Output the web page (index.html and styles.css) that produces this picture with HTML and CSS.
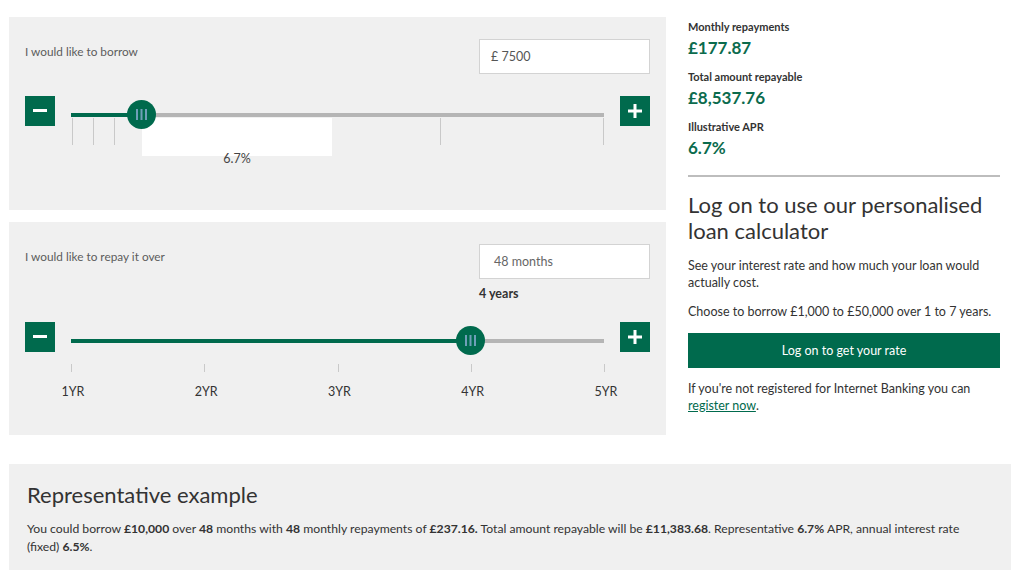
FILE: index.html
```html
<!DOCTYPE html>
<html lang="en">

<head>
    <meta charset="UTF-8">
    <meta name="viewport" content="width=device-width, initial-scale=1.0">
    <title>Loan calculator</title>
    <link rel="stylesheet" href="styles.css">
</head>

<body>
    <div class="page">
        <div class="top">
            <div class="calc">
                <!-- amount -->
                <div class="panel panel-amount">
                    <div class="head">
                        <div class="label">I would like to borrow</div>
                        <div class="field-wrap">
                            <div class="field">£ 7500</div>
                        </div>
                    </div>
                    <div class="slider">
                        <button class="step"><svg width="14" height="4"><rect width="14" height="3" fill="#fff"/></svg></button>
                        <div class="track">
                            <div class="bar"></div>
                            <div class="fill" style="width:13.3%"></div>
                            <span class="tick tall" style="left:1px"></span>
                            <span class="tick tall" style="left:22px"></span>
                            <span class="tick tall" style="left:43px"></span>
                            <span class="tick tall dark" style="left:71px"></span>
                            <span class="tick tall" style="left:260px"></span>
                            <span class="tick tall" style="left:369px"></span>
                            <span class="tick tall" style="left:532px"></span>
                            <div class="tip" style="left:71px"><span>6.7%</span></div>
                            <div class="thumb" style="left:13.3%">
                                <svg width="29" height="29">
                                    <circle cx="14.5" cy="14.5" r="14.5" fill="#006a4d"/>
                                    <rect x="9" y="9" width="2" height="11" fill="#6f9fb8"/>
                                    <rect x="13.5" y="9" width="2" height="11" fill="#6f9fb8"/>
                                    <rect x="18" y="9" width="2" height="11" fill="#6f9fb8"/>
                                </svg>
                            </div>
                        </div>
                        <button class="step"><svg width="14" height="14"><rect y="5.5" width="14" height="3" fill="#fff"/><rect x="5.5" width="3" height="14" fill="#fff"/></svg></button>
                    </div>
                </div>

                <!-- term -->
                <div class="panel panel-term">
                    <div class="head">
                        <div class="label">I would like to repay it over</div>
                        <div class="field-wrap">
                            <div class="field field-term">48 months</div>
                            <div class="years">4 years</div>
                        </div>
                    </div>
                    <div class="slider slider-term">
                        <button class="step"><svg width="14" height="4"><rect width="14" height="3" fill="#fff"/></svg></button>
                        <div class="track">
                            <div class="bar"></div>
                            <div class="fill" style="width:75%"></div>
                            <span class="tick short" style="left:0%"></span>
                            <span class="tick short" style="left:25%"></span>
                            <span class="tick short" style="left:50%"></span>
                            <span class="tick short" style="left:75%"></span>
                            <span class="tick short" style="left:100%"></span>
                            <span class="yr" style="left:0%">1YR</span>
                            <span class="yr" style="left:25%">2YR</span>
                            <span class="yr" style="left:50%">3YR</span>
                            <span class="yr" style="left:75%">4YR</span>
                            <span class="yr" style="left:100%">5YR</span>
                            <div class="thumb" style="left:75%">
                                <svg width="29" height="29">
                                    <circle cx="14.5" cy="14.5" r="14.5" fill="#006a4d"/>
                                    <rect x="9" y="9" width="2" height="11" fill="#6f9fb8"/>
                                    <rect x="13.5" y="9" width="2" height="11" fill="#6f9fb8"/>
                                    <rect x="18" y="9" width="2" height="11" fill="#6f9fb8"/>
                                </svg>
                            </div>
                        </div>
                        <button class="step"><svg width="14" height="14"><rect y="5.5" width="14" height="3" fill="#fff"/><rect x="5.5" width="3" height="14" fill="#fff"/></svg></button>
                    </div>
                </div>
            </div>

            <div class="side">
                <div class="stat">
                    <div class="stat-label">Monthly repayments</div>
                    <div class="stat-value">£177.87</div>
                </div>
                <div class="stat">
                    <div class="stat-label">Total amount repayable</div>
                    <div class="stat-value">£8,537.76</div>
                </div>
                <div class="stat">
                    <div class="stat-label">Illustrative APR</div>
                    <div class="stat-value">6.7%</div>
                </div>
                <hr class="rule">
                <h2 class="side-title">Log on to use our personalised loan calculator</h2>
                <p class="side-text first">See your interest rate and how much your loan would actually cost.</p>
                <p class="side-text">Choose to borrow £1,000 to £50,000 over 1 to 7 years.</p>
                <a class="btn" href="#">Log on to get your rate</a>
                <p class="side-text note">If you're not registered for Internet Banking you can <a href="#">register now</a>.</p>
            </div>
        </div>

        <div class="example">
            <h2>Representative example</h2>
            <p>You could borrow <b>£10,000</b> over <b>48</b> months with <b>48</b> monthly repayments of <b>£237.16.</b> Total amount repayable will be <b>£11,383.68</b>. Representative <b>6.7%</b> APR, annual interest rate (fixed) <b>6.5%</b>.</p>
        </div>
    </div>
</body>

</html>
```

FILE: styles.css
```css
* {
    margin: 0;
    padding: 0;
    box-sizing: border-box;
}

body {
    font-family: Lato, "Liberation Sans", sans-serif;
    color: #333;
    background: #fff;
}

.page {
    width: 1011px;
    padding: 17px 0 0 9px;
}

.top {
    display: flex;
    gap: 22px;
}

.calc {
    width: 657px;
    display: flex;
    flex-direction: column;
    gap: 12px;
}

.panel {
    background: #f0f0f0;
    padding: 22px 16px 0;
}
.panel-amount {
    height: 193px;
}
.panel-term {
    height: 213px;
}

.head {
    display: flex;
    justify-content: space-between;
}

.label {
    padding-top: 4px;
    font-size: 11.8px;
    line-height: 17px;
    color: #5c5c5c;
}

.field-wrap {
    width: 171px;
}

.field {
    height: 35px;
    line-height: 33px;
    background: #fff;
    border: 1px solid #d3d3d3;
    padding-left: 11px;
    font-size: 12.5px;
    color: #555;
}
.field-term {
    padding-left: 14px;
    color: #666;
}

.years {
    margin-top: 6px;
    font-size: 12.5px;
    line-height: 17px;
    font-weight: bold;
    color: #333;
}

.slider {
    display: flex;
    gap: 16px;
    margin-top: 22px;
}
.slider-term {
    margin-top: 20px;
}

.step {
    width: 30px;
    height: 30px;
    flex: none;
    border: none;
    background: #006a4d;
    display: flex;
    align-items: center;
    justify-content: center;
    cursor: pointer;
}
.step svg {
    display: block;
}

.track {
    flex: 1;
    height: 30px;
    position: relative;
}

.bar, .fill {
    position: absolute;
    top: 17px;
    left: 0;
    height: 4px;
}
.bar {
    right: 0;
    background: #b5b5b5;
}
.fill {
    background: #006a4d;
}

.tick {
    position: absolute;
    width: 1px;
    background: #c9c9c9;
}
.tick.tall {
    top: 22px;
    height: 27px;
}
.tick.dark {
    background: #666;
}
.tick.short {
    top: 42px;
    height: 8px;
}

.tip {
    position: absolute;
    top: 22px;
    width: 190px;
    height: 38px;
    background: #fff;
    text-align: center;
}
.tip span {
    display: block;
    padding-top: 32px;
    font-size: 12.5px;
    line-height: 17px;
    color: #444;
}

.thumb {
    position: absolute;
    top: 4px;
    margin-left: -14.5px;
}
.thumb svg {
    display: block;
}

.yr {
    position: absolute;
    top: 62px;
    transform: translateX(-50%);
    margin-left: 2px;
    font-size: 12.5px;
    line-height: 16px;
    color: #333;
}

.side {
    width: 312px;
    padding-top: 2px;
}

.stat {
    height: 40px;
    margin-bottom: 10px;
}
.stat-label {
    font-size: 11px;
    line-height: 16px;
    font-weight: bold;
    color: #333;
}
.stat-value {
    margin-top: 2px;
    font-size: 17px;
    line-height: 22px;
    font-weight: bold;
    color: #0b6b4d;
}

.rule {
    border: none;
    border-top: 2px solid #bdbdbd;
    margin-top: 16px;
}

.side-title {
    margin-top: 15px;
    font-size: 22px;
    line-height: 26px;
    font-weight: normal;
    color: #333;
}

.side-text {
    margin-top: 12px;
    font-size: 12.5px;
    line-height: 17px;
    color: #333;
}
.side-text.first {
    margin-top: 13px;
}
.side-text.note {
    margin-top: 12px;
}
.side-text a {
    color: #006a4d;
}

.btn {
    display: block;
    margin-top: 13px;
    height: 35px;
    line-height: 35px;
    background: #006a4d;
    color: #fff;
    text-align: center;
    text-decoration: none;
    font-size: 12.5px;
}

.example {
    margin-top: 29px;
    width: 1002px;
    height: 120px;
    background: #f0f0f0;
    padding: 17px 18px 0;
}
.example h2 {
    font-size: 22px;
    line-height: 28px;
    font-weight: normal;
    color: #333;
}
.example p {
    margin-top: 11px;
    font-size: 12.2px;
    line-height: 18px;
    color: #333;
}
```
